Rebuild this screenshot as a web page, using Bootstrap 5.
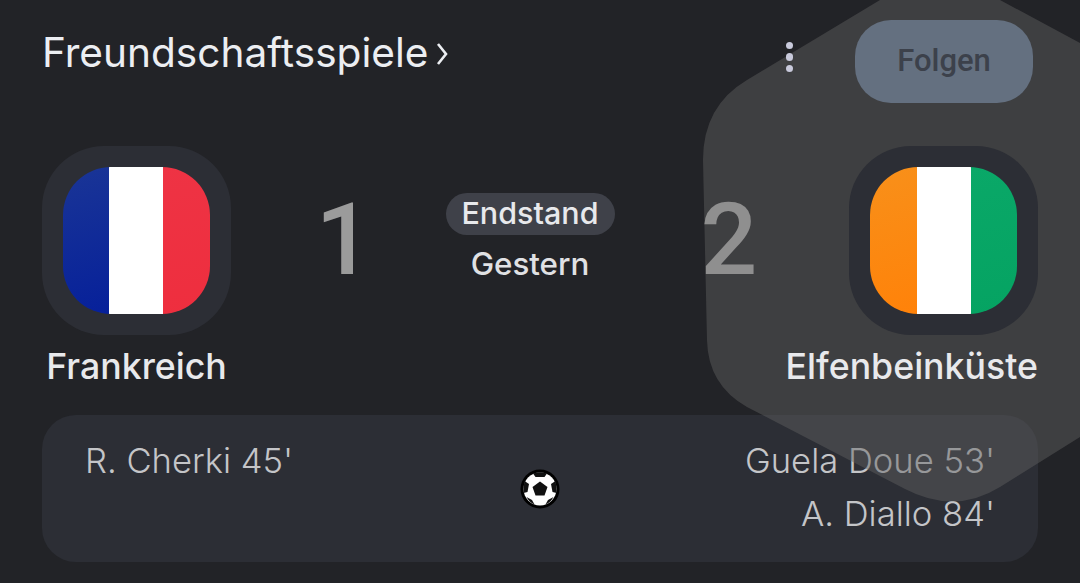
<!doctype html>
<html lang="de">

<head>
    <meta charset="utf-8">
    <meta name="viewport" content="width=device-width, initial-scale=1">
    <title>Freundschaftsspiele</title>
    <link href="https://cdn.jsdelivr.net/npm/bootstrap@5.3.1/dist/css/bootstrap.min.css" rel="stylesheet">
    <style>
        body {
            background: #222327;
            color: #e8e9ec;
            font-family: Inter, "Liberation Sans", sans-serif;
            overflow: hidden;
        }

        .match-page {
            width: 1080px;
            height: 583px;
            padding: 20px 42px 0 42px;
        }

        .match-head {
            height: 83px;
        }

        .comp-title {
            font-size: 40.6px;
            line-height: 1;
            margin-top: -16px;
            color: #eceef2;
        }

        .head-right {
            z-index: 2;
        }

        .more-dots {
            gap: 4.2px;
            margin-right: 62px;
            margin-top: -9px;
        }

        .more-dots span {
            width: 7.5px;
            height: 7.5px;
            background: #c9cadc;
        }

        .follow-btn {
            width: 178px;
            height: 83px;
            margin-right: 5px;
            background: #647080;
            color: #3c414b;
            font-family: Roboto, sans-serif;
            font-size: 31px;
            font-weight: 500;
            border-radius: 36px;
            border: 0;
        }

        .match-main {
            margin-top: 43px;
            height: 269px;
        }

        .team-col {
            width: 189px;
            z-index: 2;
        }

        .team-tile {
            width: 189px;
            height: 189px;
            background: #2c2e35;
            border-radius: 62px;
        }

        .flag-box {
            width: 147px;
            height: 147px;
            border-radius: 48px;
        }

        .stripe-mid {
            width: 54px;
            background: #fff;
        }

        .fr-left {
            width: 46px;
            background: linear-gradient(165deg, #1a3596, #06209a);
        }

        .fr-right {
            width: 47px;
            background: linear-gradient(165deg, #ee3344, #ee2e3e);
        }

        .ci-left {
            width: 47px;
            background: linear-gradient(165deg, #f8901a, #ff8209);
        }

        .ci-right {
            width: 46px;
            background: linear-gradient(165deg, #0aa868, #05a362);
        }

        .team-name {
            font-size: 35.7px;
            font-weight: 500;
            line-height: 1;
            margin-top: 14px;
            white-space: nowrap;
            color: #e8e9ec;
        }

        .score-num {
            width: 60px;
            font-family: Roboto, sans-serif;
            font-size: 100px;
            font-weight: 500;
            line-height: 1;
            text-align: center;
            margin-top: 44px;
        }

        .score-home {
            color: #9b9b9b;
            margin-left: 83px;
        }

        .score-away {
            color: #b4b4b4;
            margin-right: 90px;
        }

        .state-col {
            width: 170px;
            margin: 47px 84px 0 71px;
        }

        .state-pill {
            height: 42px;
            line-height: 40px;
            background: #3f4149;
            font-size: 30.5px;
            font-weight: 500;
            width: 169px;
            border-radius: 21px;
            color: #e8e9ec;
        }

        .state-day {
            font-size: 31.3px;
            font-weight: 500;
            line-height: 1;
            margin-top: 14px;
            color: #e0e1e4;
        }

        .goals-panel {
            height: 147px;
            background: #2c2e35;
            border-radius: 34px;
            padding: 19px 43px 0 43px;
            color: #c4c5c8;
            font-size: 34.6px;
            line-height: 53px;
            font-weight: 300;
        }

        .goals-side {
            width: 400px;
        }

        .ball-icon {
            margin-top: 35px;
        }

        .hex-layer {
            left: 0;
            top: 0;
            z-index: 1;
            pointer-events: none;
        }
    </style>
</head>

<body>
    <div class="match-page position-relative">
        <svg class="hex-layer position-absolute" width="1080" height="583" viewBox="0 0 1080 583">
            <path d="M880 0 L747 80 Q703 106 703 160 L707 340 Q708 385 747 407 L905 489 Q955 515 1000 487 L1080 437 L1080 43 L1000 0 Z" fill="#626262" fill-opacity="0.45" />
        </svg>

        <div class="match-head d-flex justify-content-between align-items-center">
            <div class="comp-title d-flex align-items-center gap-2">
                <span>Freundschaftsspiele</span>
                <svg width="12" height="24" viewBox="0 0 12 24">
                    <polyline points="2,2 10,12 2,22" fill="none" stroke="#eceef2" stroke-width="2.6" />
                </svg>
            </div>
            <div class="head-right d-flex align-items-center position-relative">
                <div class="more-dots d-flex flex-column">
                    <span class="rounded-circle"></span>
                    <span class="rounded-circle"></span>
                    <span class="rounded-circle"></span>
                </div>
                <button class="follow-btn" type="button">Folgen</button>
            </div>
        </div>

        <div class="match-main d-flex justify-content-between">
            <div class="team-col d-flex flex-column align-items-center position-relative">
                <div class="team-tile d-flex align-items-center justify-content-center">
                    <div class="flag-box d-flex overflow-hidden">
                        <div class="fr-left"></div>
                        <div class="stripe-mid"></div>
                        <div class="fr-right"></div>
                    </div>
                </div>
                <div class="team-name">Frankreich</div>
            </div>

            <div class="d-flex">
                <div class="score-num score-home">1</div>
                <div class="state-col d-flex flex-column align-items-center">
                    <div class="state-pill text-center">Endstand</div>
                    <div class="state-day">Gestern</div>
                </div>
                <div class="score-num score-away">2</div>
            </div>

            <div class="team-col d-flex flex-column align-items-end position-relative">
                <div class="team-tile d-flex align-items-center justify-content-center">
                    <div class="flag-box d-flex overflow-hidden">
                        <div class="ci-left"></div>
                        <div class="stripe-mid"></div>
                        <div class="ci-right"></div>
                    </div>
                </div>
                <div class="team-name">Elfenbeinküste</div>
            </div>
        </div>

        <div class="goals-panel d-flex justify-content-between">
            <div class="goals-side">R. Cherki 45'</div>
            <svg class="ball-icon" width="40" height="40" viewBox="0 0 40 40">
                <circle cx="20" cy="20" r="19.5" fill="#000" />
                <circle cx="20" cy="20" r="16.5" fill="#fff" />
                <polygon points="20,12.500 27.500,18 24.500,26.500 15.500,26.500 12.500,18" fill="#111" />
                <path d="M13 4.500 Q20 2 27 4.500 L24.500 8 L15.500 8 Z" fill="#111" />
                <path d="M4.500 12 L9 15 L7.500 23 L3.500 24 Q3 18 4.500 12 Z" fill="#111" />
                <path d="M35.500 12 L31 15 L32.500 23 L36.500 24 Q37 18 35.500 12 Z" fill="#111" />
                <path d="M6.500 28 L12 31 L14.500 35.500 Q9.500 33.500 6.500 28 Z" fill="#111" />
                <path d="M33.500 28 L28 31 L25.500 35.500 Q30.500 33.500 33.500 28 Z" fill="#111" />
            </svg>
            <div class="goals-side text-end">Guela Doue 53'<br>A. Diallo 84'</div>
        </div>
    </div>
    <script src="https://cdn.jsdelivr.net/npm/bootstrap@5.3.1/dist/js/bootstrap.bundle.min.js"></script>
</body>

</html>
